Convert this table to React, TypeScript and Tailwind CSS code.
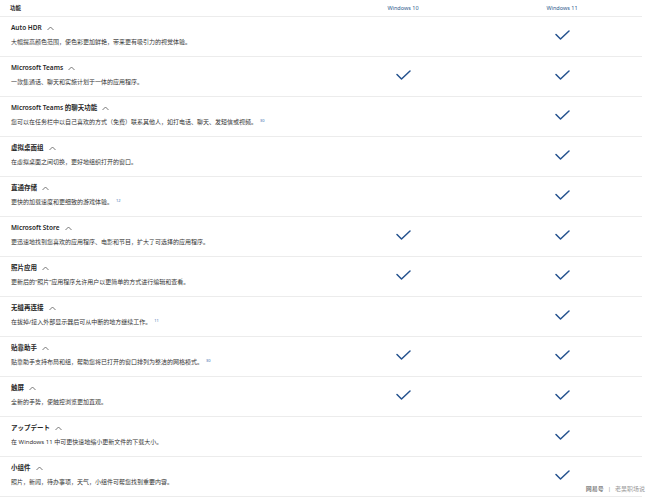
const font = { fontFamily: '"Noto Sans", "Noto Sans CJK SC", sans-serif' };

type Row = { title: string; desc: string; note?: string; w10: boolean; w11: boolean };

const rows: Row[] = [
  { title: "Auto HDR", desc: "大幅提高颜色范围，使色彩更加鲜艳，带来更有吸引力的视觉体验。", w10: false, w11: true },
  { title: "Microsoft Teams", desc: "一款集通话、聊天和实施计划于一体的应用程序。", w10: true, w11: true },
  { title: "Microsoft Teams 的聊天功能", desc: "您可以在任务栏中以自己喜欢的方式（免费）联系其他人，如打电话、聊天、发短信或视频。", note: "30", w10: false, w11: true },
  { title: "虚拟桌面组", desc: "在虚拟桌面之间切换，更好地组织打开的窗口。", w10: false, w11: true },
  { title: "直通存储", desc: "更快的加载速度和更细致的游戏体验。", note: "12", w10: false, w11: true },
  { title: "Microsoft Store", desc: "更迅速地找到您喜欢的应用程序、电影和节目，扩大了可选择的应用程序。", w10: true, w11: true },
  { title: "照片应用", desc: "更新后的“照片”应用程序允许用户以更简单的方式进行编辑和查看。", w10: true, w11: true },
  { title: "无缝再连接", desc: "在拔掉/接入外部显示器后可从中断的地方继续工作。", note: "11", w10: false, w11: true },
  { title: "贴靠助手", desc: "贴靠助手支持布局和组，帮助您将已打开的窗口排列为整洁的网格模式。", note: "30", w10: true, w11: true },
  { title: "触屏", desc: "全新的手势，使触控浏览更加直观。", w10: true, w11: true },
  { title: "アップデート", desc: "在 Windows 11 中可更快速地缩小更新文件的下载大小。", w10: false, w11: true },
  { title: "小组件", desc: "照片，新闻，待办事项，天气，小组件可帮您找到重要内容。", w10: false, w11: true },
];

function Check() {
  return (
    <svg width="15" height="10" viewBox="0 0 15 10" fill="none">
      <polyline points="1,4.5 5.5,9 14,1" stroke="#24528e" strokeWidth="1.5" strokeLinecap="round" strokeLinejoin="round" />
    </svg>
  );
}

function Caret() {
  return (
    <svg width="7" height="5" viewBox="0 0 7 5" fill="none">
      <polyline points="0.5,4 3.5,1 6.5,4" stroke="#555" strokeWidth="0.8" />
    </svg>
  );
}

export default function App() {
  return (
    <div className="relative w-[650px] h-[499px] overflow-hidden bg-white text-[#222]" style={font}>
      <div className="w-[642px]">
        <div className="grid grid-cols-[324px_158px_160px] h-[17px] items-center border-b border-[#ececec]">
          <p className="pl-[10px] text-[5.5px] font-semibold">功能</p>
          <p className="text-center text-[5.5px] text-[#2d5a8c]">Windows 10</p>
          <p className="text-center text-[5.5px] text-[#2d5a8c]">Windows 11</p>
        </div>
        {rows.map((row, i) => (
          <div key={i} className="grid grid-cols-[324px_158px_160px] h-[40px] border-b border-[#ececec]">
            <div className="pl-[11px] pt-[6px]">
              <div className="flex items-center gap-[5px] h-[10px]">
                <span className="text-[6.5px] font-semibold text-[#262626] whitespace-nowrap">{row.title}</span>
                <Caret />
              </div>
              <p className="mt-[5px] text-[6px] text-[#333] whitespace-nowrap">
                {row.desc}
                {row.note && <sup className="ml-[3px] text-[4px] text-[#3a6fb0]">{row.note}</sup>}
              </p>
            </div>
            <div className="flex items-center justify-center pb-[3px]">{row.w10 && <Check />}</div>
            <div className="flex items-center justify-center pb-[3px]">{row.w11 && <Check />}</div>
          </div>
        ))}
      </div>
      <div className="absolute right-[5px] bottom-[5px] flex items-center gap-[4px] text-[6px] text-[#999]">
        <span className="font-bold text-[#888]">网易号</span>
        <span>|</span>
        <span>老吴职场说</span>
      </div>
    </div>
  );
}
